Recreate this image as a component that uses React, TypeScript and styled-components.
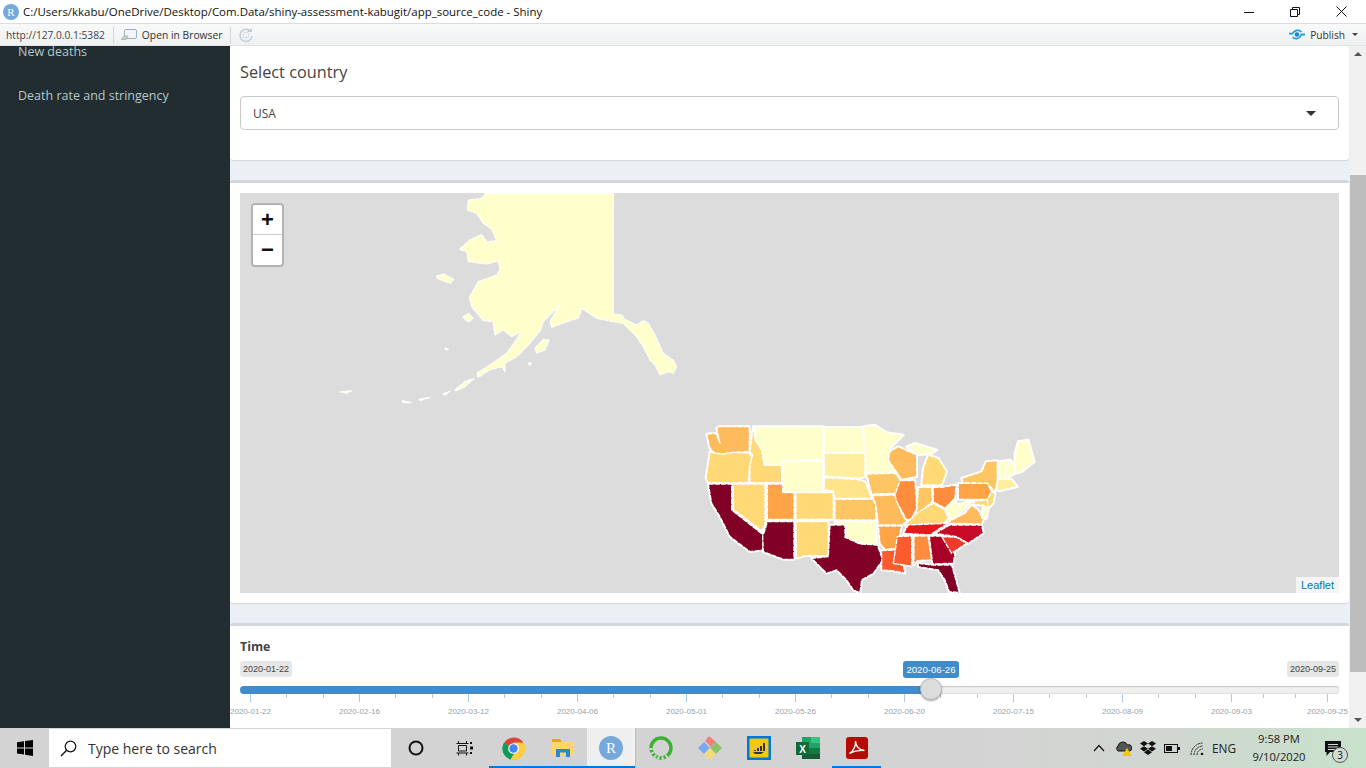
import styled, { createGlobalStyle } from 'styled-components'
import { Fragment } from 'react'

const GlobalStyle = createGlobalStyle`
  html, body, #root { margin: 0; padding: 0; height: 100%; }
  body { font-family: "Open Sans", "Liberation Sans", sans-serif; overflow: hidden; background: #fff; }
  * { box-sizing: border-box; }
`

const Page = styled.div`
  width: 1366px;
  height: 768px;
  display: flex;
  flex-direction: column;
  overflow: hidden;
`

const TitleBar = styled.div`
  height: 24px;
  flex: none;
  display: flex;
  align-items: center;
  padding-left: 3px;
  background: #fff;
  border-bottom: 1px solid #dcdcdc;
`

const RBadge = styled.div`
  width: 16px;
  height: 16px;
  border-radius: 50%;
  background: #75a8dc;
  color: #fff;
  font: 11px "Liberation Serif", serif;
  display: flex;
  align-items: center;
  justify-content: center;
`

const TitleText = styled.div`
  margin-left: 4px;
  font-size: 11.47px;
  color: #111;
  white-space: nowrap;
`

const WindowButtons = styled.div`
  margin-left: auto;
  display: flex;
  padding-right: 2px;
`

const WindowButton = styled.div`
  width: 46px;
  height: 23px;
  display: flex;
  align-items: center;
  justify-content: center;
`

const ToolBar = styled.div`
  height: 22px;
  flex: none;
  display: flex;
  align-items: center;
  padding-left: 6px;
  font-size: 10px;
  color: #333;
  background: linear-gradient(#f8f9f9, #eff0f1);
  border-bottom: 1px solid #e2e2e2;
`

const Divider = styled.div`
  width: 1px;
  height: 16px;
  background: #d4d4d4;
  margin: 0 7px 0 8px;
`

const UrlText = styled.span`
  color: #444;
  font-size: 10.2px;
`

const BrowserButton = styled.div`
  display: flex;
  align-items: center;
  gap: 5px;
  font-size: 10.3px;
`

const PublishGroup = styled.div`
  margin-left: auto;
  display: flex;
  align-items: center;
  gap: 5px;
  padding-right: 8px;
  font-size: 10.2px;
  color: #333;
`

const Caret = styled.div`
  width: 0;
  height: 0;
  margin-left: 2px;
  border-left: 3px solid transparent;
  border-right: 3px solid transparent;
  border-top: 3px solid #444;
`

const Body = styled.div`
  flex: 1;
  min-height: 0;
  display: flex;
`

const Sidebar = styled.nav`
  width: 230px;
  flex: none;
  background: #222d32;
  overflow: hidden;
`

const SideList = styled.div`
  margin: -3px 0 0 18px;
  display: flex;
  flex-direction: column;
  gap: 26px;
`

const SideItem = styled.div`
  font-size: 12.5px;
  line-height: 18px;
  color: #b4c8c9;
`

const Content = styled.main`
  flex: 1;
  min-width: 0;
  display: flex;
  flex-direction: column;
  gap: 20px;
  background: #ecf0f5;
  overflow: hidden;
`

const Card = styled.section<{ $top?: boolean }>`
  background: #fff;
  padding: ${p => (p.$top ? '0 10px' : '10px 10px 10px')};
  border-top: ${p => (p.$top ? 'none' : '3px solid #d2d6de')};
  border-radius: 3px;
  box-shadow: 0 1px 1px rgba(0, 0, 0, 0.1);
`

const FieldLabel = styled.div`
  font-size: 16.3px;
  line-height: 20px;
  color: #444;
  padding-top: 16px;
`

const SelectBox = styled.div`
  height: 34px;
  margin: 14px 0 30px;
  border: 1px solid #c8c8c8;
  border-radius: 4px;
  display: flex;
  align-items: center;
  justify-content: space-between;
  padding: 0 22px 0 12px;
  font-size: 12px;
  color: #444;
`

const SelectArrow = styled.div`
  width: 0;
  height: 0;
  border-left: 5px solid transparent;
  border-right: 5px solid transparent;
  border-top: 5px solid #333;
`

const MapFrame = styled.div`
  position: relative;
  height: 400px;
  background: #dcdcdc;
  overflow: hidden;
`

const MapSvg = styled.svg`
  display: block;
`

const ZoomControl = styled.div`
  position: absolute;
  left: 11px;
  top: 10px;
  width: 33px;
  border: 2px solid #b3b3b3;
  border-radius: 4px;
  background: #fff;
`

const ZoomButton = styled.div<{ $first?: boolean }>`
  height: 30px;
  display: flex;
  align-items: center;
  justify-content: center;
  font: bold 22px "Liberation Sans", sans-serif;
  color: #111;
  border-bottom: ${p => (p.$first ? '1px solid #ccc' : 'none')};
`

const Attribution = styled.div`
  position: absolute;
  right: 0;
  bottom: 0;
  height: 16px;
  padding: 0 5px;
  background: rgba(255, 255, 255, 0.7);
  color: #0078a8;
  font: 11px/16px "Liberation Sans", sans-serif;
`

const SliderCard = styled(Card)`
  flex: 1;
  padding-top: 12px;
  box-shadow: none;
`

const SliderLabel = styled.div`
  font-size: 12.4px;
  font-weight: 700;
  line-height: 18px;
  color: #444;
`

const BubbleRow = styled.div`
  position: relative;
  height: 16px;
  margin-top: 5px;
  display: flex;
  justify-content: space-between;
`

const Bubble = styled.span`
  height: 16px;
  width: 52px;
  text-align: center;
  border-radius: 3px;
  background: #e6e6e6;
  color: #444;
  font: 9px/16px "Liberation Sans", sans-serif;
`

const CurrentBubble = styled.span`
  position: absolute;
  left: 663px;
  top: 0;
  width: 56px;
  height: 17px;
  border-radius: 3px;
  background: #428bca;
  color: #fff;
  text-align: center;
  font: 9.6px/17px "Liberation Sans", sans-serif;
`

const Track = styled.div`
  position: relative;
  height: 8px;
  margin-top: 9px;
  border-radius: 4px;
  background: #f0f0f0;
  box-shadow: inset 0 1px 1px #c4c4c4, inset 0 -1px 1px #ddd;
`

const TrackFill = styled.div`
  height: 8px;
  border-radius: 4px 0 0 4px;
  background: #428bca;
`

const Handle = styled.div`
  position: absolute;
  top: -8px;
  width: 22px;
  height: 22px;
  margin-left: -11px;
  border-radius: 50%;
  border: 1px solid #bbb;
  background: #dcdcdc;
  box-shadow: 0 1px 2px rgba(0, 0, 0, 0.35);
`

const TickRow = styled.div`
  display: flex;
  height: 8px;
  padding-left: 10px;
`

const Tick = styled.div<{ $major?: boolean }>`
  flex: none;
  width: 1px;
  height: ${p => (p.$major ? 8 : 4)}px;
  background: ${p => (p.$major ? '#a9c9e4' : '#c4c8cc')};
`

const TickGap = styled.div`
  flex: none;
`

const TickLabels = styled.div`
  display: flex;
  margin-left: -44px;
  margin-top: 4px;
`

const TickLabel = styled.div`
  flex: none;
  text-align: center;
  font: 8.05px/12px "Liberation Sans", sans-serif;
  color: #98a2ab;
  white-space: nowrap;
`

const Scrollbar = styled.div`
  width: 17px;
  flex: none;
  background: #f0f0f0;
  display: flex;
  flex-direction: column;
  align-items: stretch;
`

const ScrollArrow = styled.div<{ $down?: boolean }>`
  width: 0;
  height: 0;
  margin: ${p => (p.$down ? '0 auto 6px' : '6px auto 0')};
  border-left: 4px solid transparent;
  border-right: 4px solid transparent;
  border-bottom: ${p => (p.$down ? 'none' : '4px solid #555')};
  border-top: ${p => (p.$down ? '4px solid #555' : 'none')};
`

const ScrollThumb = styled.div`
  height: 497px;
  margin: 119px 0 0 1px;
  background: #bdbdbd;
`

const ScrollSpacer = styled.div`
  flex: 1;
`

const TaskBar = styled.footer`
  height: 40px;
  flex: none;
  display: flex;
  background: linear-gradient(90deg, #d3d3d3 0%, #d3d3d3 72%, #d0d6d0 85%, #c8e2cb 100%);
`

const StartCell = styled.div`
  width: 49px;
  display: flex;
  align-items: center;
  justify-content: center;
`

const SearchBox = styled.div`
  width: 342px;
  margin: 1px 0;
  background: #fff;
  display: flex;
  align-items: center;
  gap: 11px;
  padding-left: 11px;
  font-size: 14px;
  color: #333;
`

const TaskCell = styled.div<{ $running?: boolean; $active?: boolean }>`
  width: 49px;
  display: flex;
  align-items: center;
  justify-content: center;
  background: ${p => (p.$active ? '#efefef' : 'transparent')};
  box-shadow: ${p => (p.$running ? 'inset 0 -2px 0 #0078d7' : 'none')};
  border-right: ${p => (p.$active ? '1px solid #bdbdbd' : 'none')};
`

const AppR = styled.div`
  width: 24px;
  height: 24px;
  border-radius: 50%;
  background: #75a8dc;
  color: #fff;
  font: 15px "Liberation Serif", serif;
  display: flex;
  align-items: center;
  justify-content: center;
`

const Tray = styled.div`
  margin-left: auto;
  display: flex;
  align-items: center;
`

const TrayIcon = styled.div`
  width: 24.5px;
  display: flex;
  justify-content: center;
`

const TrayText = styled.div`
  font-size: 11.8px;
  color: #222;
  margin: 0 12px 0 3px;
`

const Clock = styled.div`
  width: 62px;
  text-align: center;
  font-size: 11.2px;
  line-height: 18px;
  color: #222;
`

const NotifyCell = styled.div`
  position: relative;
  width: 56px;
  display: flex;
  justify-content: center;
  padding-right: 10px;
`

const NotifyBadge = styled.div`
  position: absolute;
  left: 22px;
  top: 6px;
  width: 16px;
  height: 16px;
  border-radius: 50%;
  background: #d3dcd4;
  border: 1px solid #555;
  color: #111;
  font-size: 10px;
  line-height: 14px;
  text-align: center;
`

type Region = { d: string; fill: string }

const pale = '#ffffcc'
const cream = '#ffeda0'
const sand = '#fed976'
const amber = '#febb5c'
const orange = '#fea446'
const deep = '#fd8d3c'
const tomato = '#fc5b2e'
const red = '#e31a1c'
const crimson = '#c70a26'
const wine = '#800026'

// traced from the reference at 3x, see the group transform on the map
const lower48: Region[] = [
  { fill: amber, d: 'M50,72 L78,70 L90,100 L80,55 L88,50 L178,50 L178,125 L130,127 L100,132 L75,130 L60,115 Z' },
  { fill: sand, d: 'M60,125 L75,130 L100,132 L130,127 L180,130 L185,150 L178,175 L175,218 L55,218 L48,205 Z' },
  { fill: wine, d: 'M55,222 L125,222 L125,300 L220,375 L218,420 L180,425 L120,380 L90,320 L65,280 Z' },
  { fill: sand, d: 'M130,222 L225,222 L225,345 L215,362 L130,298 Z' },
  { fill: sand, d: 'M190,50 L195,90 L215,120 L222,165 L275,165 L275,218 L180,218 L180,165 L188,135 L180,125 Z' },
  { fill: pale, d: 'M195,50 L400,50 L400,150 L280,150 L275,165 L225,165 L215,120 L198,90 Z' },
  { fill: pale, d: 'M280,153 L398,153 L398,245 L280,245 Z' },
  { fill: orange, d: 'M232,222 L278,222 L278,248 L312,248 L312,328 L232,328 Z' },
  { fill: sand, d: 'M318,248 L430,248 L430,328 L318,328 Z' },
  { fill: wine, d: 'M232,335 L312,335 L312,448 L280,448 L220,425 L218,378 L225,360 Z' },
  { fill: sand, d: 'M318,335 L415,335 L415,437 L345,437 L320,445 Z' },
  { fill: pale, d: 'M403,52 L515,52 L525,128 L403,128 Z' },
  { fill: cream, d: 'M403,130 L525,130 L525,200 L505,205 L403,198 Z' },
  { fill: '#ffe48c', d: 'M403,203 L500,208 L525,215 L545,265 L435,265 L430,243 L403,240 Z' },
  { fill: '#fec662', d: 'M435,268 L548,268 L558,285 L558,330 L435,330 Z' },
  { fill: pale, d: 'M435,335 L558,335 L560,405 L520,400 L468,385 L468,345 L435,345 Z' },
  { fill: wine, d: 'M420,345 L465,345 L465,382 L510,402 L562,405 L578,450 L550,490 L515,510 L510,548 L490,540 L470,510 L440,480 L410,490 L365,445 L415,440 Z' },
  { fill: pale, d: 'M520,50 L555,45 L590,68 L640,75 L600,115 L595,150 L615,185 L530,190 L525,130 Z' },
  { fill: '#fec662', d: 'M530,192 L615,190 L635,215 L620,250 L545,252 Z' },
  { fill: amber, d: 'M548,257 L615,255 L635,310 L650,335 L635,345 L565,345 L558,285 Z' },
  { fill: orange, d: 'M565,348 L635,348 L620,415 L585,418 L570,400 Z' },
  { fill: tomato, d: 'M575,422 L618,420 L610,460 L640,465 L645,490 L605,482 L575,480 Z' },
  { fill: amber, d: 'M595,150 L600,125 L625,110 L680,135 L680,200 L635,208 Z' },
  { fill: deep, d: 'M630,212 L675,212 L680,295 L665,325 L650,330 L620,275 L615,255 Z' },
  { fill: sand, d: 'M695,225 L700,175 L715,135 L745,145 L770,185 L755,225 Z' },
  { fill: pale, d: 'M650,110 L675,100 L740,120 L725,130 L685,135 L675,130 Z' },
  { fill: '#fec662', d: 'M685,232 L725,232 L727,275 L685,310 L680,310 Z' },
  { fill: deep, d: 'M730,232 L755,232 L798,225 L795,265 L765,295 L730,275 Z' },
  { fill: sand, d: 'M645,345 L680,310 L730,280 L765,300 L775,325 L760,340 Z' },
  { fill: red, d: 'M640,370 L655,345 L775,340 L750,355 L720,375 Z' },
  { fill: tomato, d: 'M622,380 L665,378 L665,468 L640,465 L610,460 Z' },
  { fill: deep, d: 'M672,378 L714,378 L725,450 L682,452 L672,465 Z' },
  { fill: '#a80026', d: 'M718,378 L755,378 L795,432 L790,460 L728,462 Z' },
  { fill: wine, d: 'M685,460 L725,465 L785,465 L795,500 L808,548 L778,545 L765,510 L745,480 L685,470 Z' },
  { fill: '#ef3b2c', d: 'M755,380 L800,382 L830,400 L785,430 Z' },
  { fill: crimson, d: 'M735,370 L780,345 L875,345 L880,370 L835,400 L800,380 L765,375 Z' },
  { fill: amber, d: 'M770,340 L785,330 L825,310 L845,285 L865,300 L880,330 L875,342 Z' },
  { fill: pale, d: 'M765,300 L795,265 L800,285 L845,272 L820,300 L795,325 L780,325 Z' },
  { fill: orange, d: 'M805,220 L892,220 L905,245 L892,268 L805,268 Z' },
  { fill: '#fec662', d: 'M820,218 L815,205 L875,185 L888,155 L922,152 L922,210 L915,245 L892,220 Z' },
  { fill: sand, d: 'M905,245 L915,250 L910,280 L895,295 L892,270 Z' },
  { fill: sand, d: 'M850,273 L892,270 L895,295 L875,285 L855,285 Z' },
  { fill: pale, d: 'M880,285 L895,295 L890,325 L875,325 Z' },
  { fill: pale, d: 'M925,155 L960,150 L940,205 L927,205 Z' },
  { fill: pale, d: 'M960,150 L970,160 L975,190 L950,205 L940,205 Z' },
  { fill: pale, d: 'M975,130 L985,95 L1015,90 L1033,155 L995,185 L975,190 Z' },
  { fill: cream, d: 'M925,208 L965,208 L982,230 L930,242 L920,240 Z' },
]

const alaska: string[] = [
  'M468,10 L850,10 L850,372 L875,375 L885,388 L920,405 L940,392 L955,400 L975,435 L1000,490 L1030,510 L1040,530 L1030,550 L1015,545 L990,555 L975,525 L960,510 L940,470 L920,440 L880,400 L850,395 L800,385 L755,355 L745,385 L720,392 L665,412 L660,395 L688,347 L640,395 L632,420 L600,460 L560,500 L525,520 L525,545 L515,530 L480,540 L445,562 L440,550 L490,518 L530,490 L565,440 L572,425 L545,440 L520,420 L495,435 L490,395 L460,392 L425,350 L418,322 L445,275 L500,255 L510,240 L505,212 L470,222 L415,215 L410,185 L388,178 L420,150 L455,133 L470,155 L500,152 L485,118 L460,100 L440,70 L412,60 L415,30 L455,25 Z',
  'M320,258 L340,252 L372,268 L360,280 L322,265 Z',
  'M398,382 L415,370 L430,385 L415,396 Z',
  'M615,475 L640,448 L658,450 L645,480 L620,490 Z',
  'M375,600 L405,575 L432,565 L405,590 L380,602 Z',
  'M268,628 L300,622 L270,632 Z',
  'M215,632 L245,638 L220,638 Z',
  'M30,606 L65,602 L50,610 Z',
  'M345,475 L355,478 L348,480 Z',
  'M338,612 L360,604 L345,615 Z',
  'M595,520 L604,518 L600,527 Z',
]

const majorDates = ['2020-01-22', '2020-02-16', '2020-03-12', '2020-04-06', '2020-05-01', '2020-05-26', '2020-06-20', '2020-07-15', '2020-08-09', '2020-09-03', '2020-09-25']

const tickSteps = Array.from({ length: 27 }, () => 35.33)

const UsaMap = () => (
  <MapSvg width="1099" height="400" viewBox="0 0 1099 400">
    <g transform="translate(90 -3) scale(0.3333)" stroke="#fff" strokeWidth="3.5" strokeDasharray="14 2" strokeLinejoin="round">
      {alaska.map(d => <path key={d} d={d} fill={pale} />)}
    </g>
    <g transform="translate(450 217) scale(0.3333)" strokeLinejoin="round">
      {/* solid white first, so the seams between the traced states read as borders */}
      <g stroke="#fff" strokeWidth="8" fill="#fff">
        {lower48.map(r => <path key={r.d} d={r.d} />)}
      </g>
      <g stroke="#fff" strokeWidth="4" strokeDasharray="16 3">
        {lower48.map(r => <path key={r.d} d={r.d} fill={r.fill} />)}
      </g>
    </g>
  </MapSvg>
)

const TimeSlider = () => (
  <>
    <SliderLabel>Time</SliderLabel>
    <BubbleRow>
      <Bubble>2020-01-22</Bubble>
      <CurrentBubble>2020-06-26</CurrentBubble>
      <Bubble>2020-09-25</Bubble>
    </BubbleRow>
    <Track>
      <TrackFill style={{ width: 691 }} />
      <Handle style={{ left: 691 }} />
    </Track>
    <TickRow>
      {tickSteps.map((w, i) => (
        <Fragment key={i}>
          <Tick $major={i % 3 === 0} />
          <TickGap style={{ width: w }} />
        </Fragment>
      ))}
      <Tick $major />
      <TickGap style={{ width: 31 }} />
      <Tick />
      <TickGap style={{ width: 31 }} />
      <Tick />
      <TickGap style={{ width: 31 }} />
      <Tick $major />
    </TickRow>
    <TickLabels>
      {majorDates.map((d, i) => (
        <TickLabel key={d} style={{ width: i === 10 ? 83 : 109 }}>{d}</TickLabel>
      ))}
    </TickLabels>
  </>
)

const ChromeIcon = () => (
  <svg width="23" height="23" viewBox="0 0 24 24">
    <path d="M12 12 L2 6.5 A12 12 0 0 1 22.5 6 L12 6 Z" fill="#db4437" />
    <path d="M12 12 L2 6 A12 12 0 0 0 9 23.6 L14 15 Z" fill="#0f9d58" />
    <path d="M12 6 L22.5 6 A12 12 0 0 1 9 23.6 L15 14 Z" fill="#ffcd40" />
    <circle cx="12" cy="12" r="5.6" fill="#fff" />
    <circle cx="12" cy="12" r="4.4" fill="#4285f4" />
  </svg>
)

const FolderIcon = () => (
  <svg width="22" height="20" viewBox="0 0 22 20">
    <path d="M0 1 H8 L10 4 H22 V17 H0 Z" fill="#e0a526" />
    <rect y="4" width="22" height="13" fill="#fbd668" />
    <path d="M4 19 V11 H18 V19 H14 V14.5 H8 V19 Z" fill="#2c87d0" />
  </svg>
)

const RingIcon = () => (
  <svg width="24" height="24" viewBox="0 0 24 24">
    <circle cx="12" cy="12" r="10" fill="none" stroke="#3cb034" strokeWidth="3.4" />
    <circle cx="12" cy="12" r="10" fill="none" stroke="#d3d3d3" strokeWidth="3.6" strokeDasharray="2 2.2 2 2.2 2 40" transform="rotate(120 12 12)" />
  </svg>
)

const DiamondIcon = () => (
  <svg width="24" height="24" viewBox="0 0 24 24">
    <path d="M0 12 L6 6 L12 12 L6 18 Z" fill="#7ba9ef" />
    <path d="M7 5 L11 0 L18 6 L13 11 Z" fill="#ee8080" />
    <path d="M12 12 L18 6 L24 12 L18 18 Z" fill="#8cc269" />
    <path d="M6 18 L12 12 L18 18 L12 24 Z" fill="#f3da7a" />
  </svg>
)

const PowerBiIcon = () => (
  <svg width="24" height="24" viewBox="0 0 24 24">
    <rect width="24" height="24" fill="#0078d7" />
    <rect x="2.5" y="2.5" width="19" height="19" rx="1" fill="#f2c811" />
    <path d="M7 15 V14 H9 V15 Z M10 15 V12 H12 V15 Z M13 15 V10 H15 V15 Z M16 15 V7 H18 V15 Z" fill="#333" />
    <path d="M6 16 H17 L14 18 H8 Z" fill="#333" />
  </svg>
)

const ExcelIcon = () => (
  <svg width="24" height="22" viewBox="0 0 24 22">
    <rect x="6" width="18" height="22" fill="#21a366" />
    <rect x="15" width="9" height="6" fill="#33c481" />
    <rect x="6" y="11" width="18" height="6" fill="#107c41" />
    <rect x="6" y="17" width="18" height="5" fill="#185c37" />
    <rect y="5" width="13" height="13" fill="#0f6b3c" />
    <text x="6.5" y="15.5" textAnchor="middle" fontFamily="Liberation Sans" fontWeight="700" fontSize="10" fill="#fff">X</text>
  </svg>
)

const AcrobatIcon = () => (
  <svg width="22" height="22" viewBox="0 0 22 22">
    <rect width="22" height="22" rx="3" fill="#b30b00" />
    <path d="M3.5 16.5 C7 15 10 9 9.5 4 C9.5 9 13 13 18.5 13.5 C14 13 8 14 3.5 16.5 Z" fill="none" stroke="#fff" strokeWidth="1.4" />
  </svg>
)

const App = () => (
  <Page>
    <GlobalStyle />
    <TitleBar>
      <RBadge>R</RBadge>
      <TitleText>C:/Users/kkabu/OneDrive/Desktop/Com.Data/shiny-assessment-kabugit/app_source_code - Shiny</TitleText>
      <WindowButtons>
        <WindowButton>
          <svg width="10" height="10"><path d="M0 5.5 H10" stroke="#111" /></svg>
        </WindowButton>
        <WindowButton>
          <svg width="10" height="10"><path d="M0.5 2.5 H7.5 V9.5 H0.5 Z M2.5 2.5 V0.5 H9.5 V7.5 H7.5" fill="none" stroke="#111" /></svg>
        </WindowButton>
        <WindowButton>
          <svg width="11" height="11"><path d="M0.5 0.5 L10.5 10.5 M10.5 0.5 L0.5 10.5" stroke="#111" /></svg>
        </WindowButton>
      </WindowButtons>
    </TitleBar>
    <ToolBar>
      <UrlText>http://127.0.0.1:5382</UrlText>
      <Divider />
      <BrowserButton>
        <svg width="16" height="13" viewBox="0 0 16 13">
          <rect x="3.5" y="1.5" width="12" height="9" rx="1.5" fill="#f4f6f8" stroke="#9db0c0" />
          <path d="M0.5 11.5 L3 8 H7 L5 11.5 Z" fill="#c9d2da" stroke="#8c9aa6" strokeWidth="0.6" />
        </svg>
        <span>Open in Browser</span>
      </BrowserButton>
      <Divider />
      <svg width="16" height="16" viewBox="0 0 16 16">
        <path d="M13 5 A6 6 0 1 0 14 9" fill="none" stroke="#c3ccd4" strokeWidth="1.5" />
        <path d="M9 5 H14 V1 Z" fill="#c3ccd4" />
        <circle cx="8" cy="8" r="2.8" fill="none" stroke="#d5dbe0" />
      </svg>
      <PublishGroup>
        <svg width="16" height="13" viewBox="0 0 18 14">
          <path d="M0 6 H4 C6 2 11 1 14 4" fill="none" stroke="#1fa0e6" strokeWidth="2" />
          <path d="M18 7 H14 C12 12 7 13 4 10" fill="none" stroke="#1fa0e6" strokeWidth="2" />
          <circle cx="9" cy="7" r="2.6" fill="#1a86d0" />
        </svg>
        <span>Publish</span>
        <Caret />
      </PublishGroup>
    </ToolBar>
    <Body>
      <Sidebar>
        <SideList>
          <SideItem>New deaths</SideItem>
          <SideItem>Death rate and stringency</SideItem>
        </SideList>
      </Sidebar>
      <Content>
        <Card $top>
          <FieldLabel>Select country</FieldLabel>
          <SelectBox>
            USA
            <SelectArrow />
          </SelectBox>
        </Card>
        <Card>
          <MapFrame>
            <UsaMap />
            <ZoomControl>
              <ZoomButton $first>+</ZoomButton>
              <ZoomButton>−</ZoomButton>
            </ZoomControl>
            <Attribution>Leaflet</Attribution>
          </MapFrame>
        </Card>
        <SliderCard>
          <TimeSlider />
        </SliderCard>
      </Content>
      <Scrollbar>
        <ScrollArrow />
        <ScrollThumb />
        <ScrollSpacer />
        <ScrollArrow $down />
      </Scrollbar>
    </Body>
    <TaskBar>
      <StartCell>
        <svg width="16" height="16" viewBox="0 0 16 16">
          <path d="M0 2.2 L7 1.2 V7.4 H0 Z M8 1 L16 0 V7.4 H8 Z M0 8.4 H7 V14.6 L0 13.6 Z M8 8.4 H16 V16 L8 14.8 Z" fill="#000" />
        </svg>
      </StartCell>
      <SearchBox>
        <svg width="17" height="17" viewBox="0 0 17 17">
          <circle cx="10.5" cy="6.5" r="5.3" fill="none" stroke="#111" strokeWidth="1.2" />
          <path d="M6.7 10.3 L1 16" stroke="#111" strokeWidth="1.4" />
        </svg>
        <span>Type here to search</span>
      </SearchBox>
      <TaskCell>
        <svg width="16" height="16"><circle cx="8" cy="8" r="6.5" fill="none" stroke="#111" strokeWidth="2" /></svg>
      </TaskCell>
      <TaskCell>
        <svg width="17" height="15" viewBox="0 0 17 15">
          <path d="M0.5 2.5 H12.5 M0.5 12 H12.5 M2.5 4.5 H10.5 V10 H2.5 Z M2.5 14.5 V12 M10.5 14.5 V12 M2.5 2.5 V0 M10.5 2.5 V0" fill="none" stroke="#111" />
          <rect x="14" y="1" width="2" height="2" fill="#111" />
          <rect x="14" y="5.5" width="3" height="3" fill="#111" />
          <rect x="14" y="11" width="2" height="2" fill="#111" />
        </svg>
      </TaskCell>
      <TaskCell $running><ChromeIcon /></TaskCell>
      <TaskCell $running><FolderIcon /></TaskCell>
      <TaskCell $running $active><AppR>R</AppR></TaskCell>
      <TaskCell><RingIcon /></TaskCell>
      <TaskCell><DiamondIcon /></TaskCell>
      <TaskCell><PowerBiIcon /></TaskCell>
      <TaskCell><ExcelIcon /></TaskCell>
      <TaskCell $running><AcrobatIcon /></TaskCell>
      <Tray>
        <TrayIcon>
          <svg width="12" height="8"><path d="M1 7 L6 1.5 L11 7" fill="none" stroke="#111" strokeWidth="1.2" /></svg>
        </TrayIcon>
        <TrayIcon>
          <svg width="17" height="16" viewBox="0 0 17 16">
            <path d="M3 11 A3 3 0 0 1 3 6 A5 5 0 0 1 12.5 5 A3 3 0 0 1 15 11 Z" fill="#555" stroke="#111" />
            <path d="M12 8 L17 16 H7 Z" fill="#f8c600" />
          </svg>
        </TrayIcon>
        <TrayIcon>
          <svg width="16" height="14" viewBox="0 0 16 14">
            <path d="M4 0 L8 2.6 L4 5.2 L0 2.6 Z M12 0 L16 2.6 L12 5.2 L8 2.6 Z M4 5.2 L8 7.8 L4 10.4 L0 7.8 Z M12 5.2 L16 7.8 L12 10.4 L8 7.8 Z M8 8.6 L12 11.2 L8 14 L4 11.2 Z" fill="#111" />
          </svg>
        </TrayIcon>
        <TrayIcon>
          <svg width="16" height="9" viewBox="0 0 16 9">
            <rect x="0.5" y="0.5" width="13" height="8" fill="none" stroke="#111" />
            <rect x="2" y="2" width="6" height="5" fill="#111" />
            <rect x="14" y="3" width="2" height="3" fill="#111" />
          </svg>
        </TrayIcon>
        <TrayIcon>
          <svg width="14" height="13" viewBox="0 0 14 13">
            <path d="M1 13 A12 12 0 0 1 13 1 M4 13 A9 9 0 0 1 13 4 M7 13 A6 6 0 0 1 13 7" fill="none" stroke="#222" strokeDasharray="2 0.7" />
            <circle cx="12" cy="12" r="1.3" fill="#111" />
          </svg>
        </TrayIcon>
        <TrayText>ENG</TrayText>
        <Clock>
          <div>9:58 PM</div>
          <div>9/10/2020</div>
        </Clock>
        <NotifyCell>
          <svg width="16" height="15" viewBox="0 0 16 15">
            <path d="M0 0 H16 V11 H5 L1.5 15 V11 H0 Z" fill="#111" />
            <path d="M3 3.5 H13 M3 6 H13 M3 8.5 H10" stroke="#d3dcd4" />
          </svg>
          <NotifyBadge>3</NotifyBadge>
        </NotifyCell>
      </Tray>
    </TaskBar>
  </Page>
)

export default App
